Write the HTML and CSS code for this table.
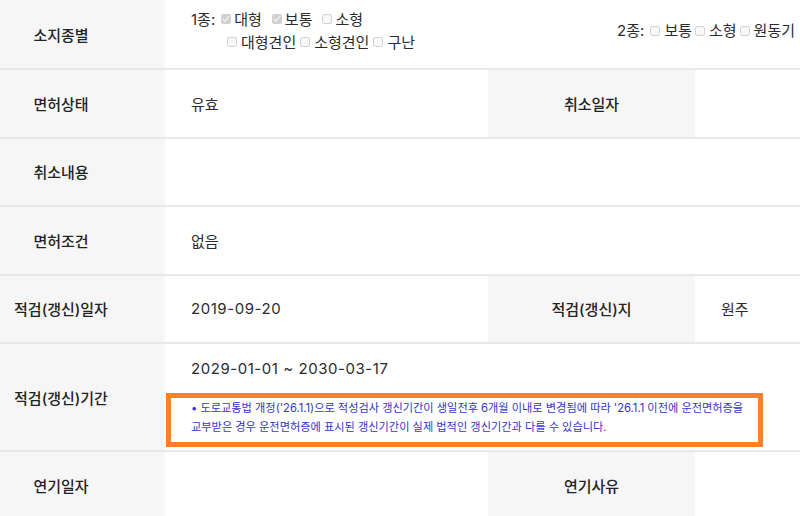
FILE: index.html
```html
<!DOCTYPE html>
<html lang="ko">
<head>
<meta charset="utf-8">
<title>면허 정보</title>
<link rel="stylesheet" href="styles.css">
</head>
<body>
<div class="grid">
  <div class="th">소지종별</div>
  <div class="td span3 kinds">
    <div class="kind1">
      <div class="line line1">
        <span class="lbl">1종:</span>
        <label class="opt"><input type="checkbox" disabled checked>대형</label>
        <label class="opt"><input type="checkbox" disabled checked>보통</label>
        <label class="opt"><input type="checkbox" disabled>소형</label>
      </div>
      <div class="line line2">
        <label class="opt"><input type="checkbox" disabled>대형견인</label>
        <label class="opt"><input type="checkbox" disabled>소형견인</label>
        <label class="opt"><input type="checkbox" disabled>구난</label>
      </div>
    </div>
    <div class="kind2 line line2">
      <span class="lbl">2종:</span>
      <label class="opt"><input type="checkbox" disabled>보통</label>
      <label class="opt"><input type="checkbox" disabled>소형</label>
      <label class="opt"><input type="checkbox" disabled>원동기</label>
    </div>
  </div>

  <div class="th">면허상태</div>
  <div class="td">유효</div>
  <div class="th mid">취소일자</div>
  <div class="td"></div>

  <div class="th">취소내용</div>
  <div class="td span3"></div>

  <div class="th">면허조건</div>
  <div class="td span3">없음</div>

  <div class="th">적검(갱신)일자</div>
  <div class="td date">2019-09-20</div>
  <div class="th mid">적검(갱신)지</div>
  <div class="td">원주</div>

  <div class="th">적검(갱신)기간</div>
  <div class="td span3 period">
    <div class="range date">2029-01-01 ~ 2030-03-17</div>
    <p class="note">• 도로교통법 개정('26.1.1)으로 적성검사 갱신기간이 생일전후 6개월 이내로 변경됨에 따라 '26.1.1 이전에 운전면허증을<br>교부받은 경우 운전면허증에 표시된 갱신기간이 실제 법적인 갱신기간과 다를 수 있습니다.</p>
    <div class="highlight"></div>
  </div>

  <div class="th">연기일자</div>
  <div class="td"></div>
  <div class="th mid">연기사유</div>
  <div class="td"></div>
</div>
</body>
</html>
```
FILE: styles.css
```css
* { box-sizing: border-box; }

body {
  margin: 0;
  background: #fff;
  color: #2b2b2b;
  font-family: "Inter", "Noto Sans CJK KR", sans-serif;
}

.grid {
  display: grid;
  grid-template-columns: 165px 323px 207px 105px;
  grid-template-rows: 70px 68.5px 68.5px 68.5px 68.5px 108px 68.5px;
}

.th,
.td {
  border-bottom: 2px solid #e8e8e8;
  display: flex;
  align-items: center;
  font-size: 15px;
}

.th {
  background: #f6f6f6;
  justify-content: center;
  padding-right: 43px;
  font-weight: 500;
  color: #222;
}

.th.mid {
  padding-right: 0;
}

.td {
  padding-left: 26px;
  color: #2b2b2b;
}

.span3 {
  grid-column: span 3;
}

.date {
  letter-spacing: 0.55px;
}

/* 소지종별 */
.kinds {
  justify-content: space-between;
  padding-right: 5px;
  padding-bottom: 7px;
}

.line {
  display: flex;
  align-items: center;
  line-height: 23px;
  white-space: nowrap;
}

.line2 {
  padding-left: 36px;
}

.kind2 {
  padding-left: 0;
}

.lbl {
  margin-right: 6px;
}

.opt {
  display: inline-flex;
  align-items: center;
}

.line1 .opt {
  margin-right: 10px;
}

.line2 .opt {
  margin-right: 4px;
}

.kind2 .opt {
  margin-right: 3px;
}

.kind2 .opt:last-child,
.line2 .opt:last-child {
  margin-right: 0;
}

.opt input {
  width: 10px;
  height: 10px;
  margin: 0 3px 0 0;
}

.line2 .opt input {
  margin-right: 4px;
}

/* 적검(갱신)기간 */
.period {
  position: relative;
  flex-direction: column;
  align-items: flex-start;
  justify-content: center;
}

.range {
  line-height: 24px;
}

.note {
  margin: 18px 0 0;
  font-size: 11.2px;
  line-height: 19px;
  letter-spacing: 0;
  color: #3434cc;
  white-space: nowrap;
}

.highlight {
  position: absolute;
  left: 1px;
  top: 49px;
  width: 597px;
  height: 54px;
  border: 5px solid #ff7f27;
  pointer-events: none;
}
```
